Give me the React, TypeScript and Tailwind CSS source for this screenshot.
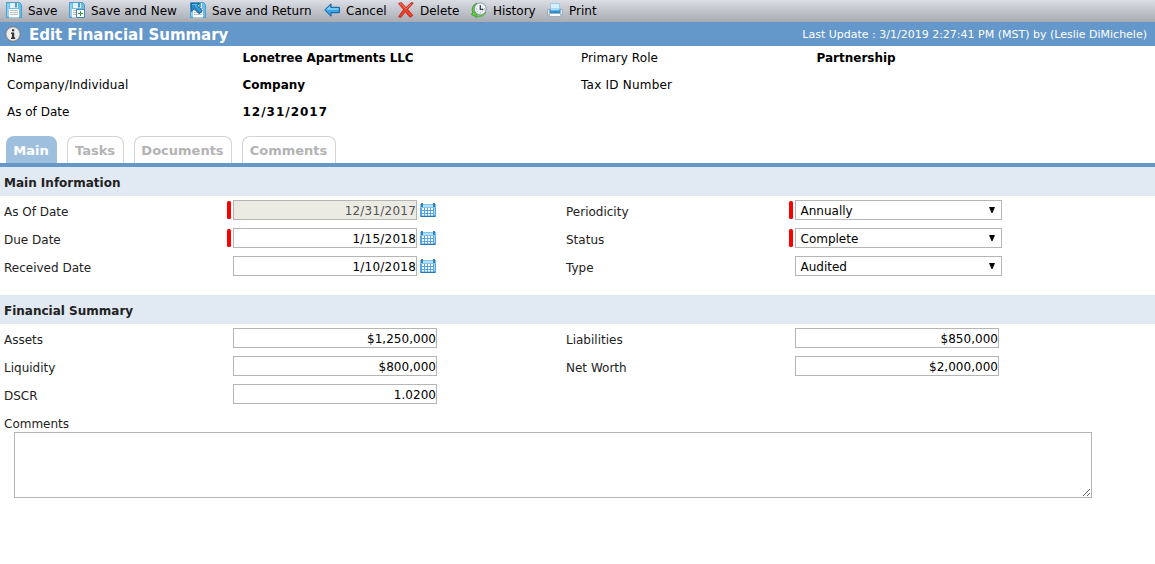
import type { ReactNode } from 'react';

function Floppy() {
  return (
    <>
      <path d="M.5.5h13l2 2v13H.5z" fill="#6cbce8" stroke="#4a9fd0" />
      <path d="M1.5 1.5h1v13h-1z" fill="#b4e3fa" />
      <path d="M4 1h8v5H4z" fill="#e4f1f9" />
      <path d="M9 1h2v4.5H9z" fill="#4b9fd2" />
      <path d="M3 7h10v8.500H3z" fill="#fff" />
      <path d="M4 8.500h8M4 10.500h8M4 12.500h8" stroke="#b9bfc4" />
    </>
  );
}

function Icon({ children }: { children: ReactNode }) {
  return (
    <svg className="block h-4 w-4 shrink-0" viewBox="0 0 16 16" fill="none">
      {children}
    </svg>
  );
}

const saveIcon = (
  <Icon>
    <Floppy />
  </Icon>
);

const saveNewIcon = (
  <Icon>
    <Floppy />
    <path d="M7.500 7.500h8v8h-8z" fill="#fff" stroke="#4484b8" />
    <path d="M11.500 9v5M9 11.500h5" stroke="#2d9c35" />
  </Icon>
);

const saveReturnIcon = (
  <Icon>
    <Floppy />
    <path d="M1 1.500h8.500L7.500 3.700l5 5-3.200 3.200-5-5L1.500 9.500z" fill="#2787c4" stroke="#0d538b" strokeWidth=".8" />
    <path d="M2 2.500h5L5.500 4l5 5" stroke="#6cc4f2" strokeWidth=".9" />
  </Icon>
);

const cancelIcon = (
  <Icon>
    <path d="M.7 8 7 1.800v3.500h8.400v5.400H7v3.500z" fill="#39a5e5" stroke="#0d5b9d" />
    <path d="M2.200 7.700 6 4v2.300h8.400v1.400z" fill="#86d3fa" />
  </Icon>
);

const deleteIcon = (
  <Icon>
    <path
      d="M.5 1.500 3.400.6 8 5.600 13.300.5l2 .5-5.600 6.300 5.200 6.300-3 1.700-4.600-5.500-4.500 5.700-2.300-.7 5-7.200z"
      fill="#ee3e27"
      stroke="#bd2418"
      strokeWidth=".8"
    />
    <path d="M2 2 3 1.600 8 7l4.900-5" stroke="#fb8a70" strokeWidth=".8" />
  </Icon>
);

const historyIcon = (
  <Icon>
    <path d="M6 1A7 7 0 0 0 1.700 10.500L.4 12.500 6 15.500l-.3-6L4 10.600V3z" fill="#62c83e" stroke="#2e8f2a" strokeWidth=".7" />
    <path d="M6 14A7 7 0 0 0 14.600 10" stroke="#5fbd43" strokeWidth="1.800" />
    <circle cx="9.300" cy="6.800" r="5.900" fill="#eef3f7" stroke="#8e9aa7" />
    <path d="M9.300 3.300v4h3" stroke="#2b3440" strokeWidth="1.200" />
    <path d="M5.300 7h.8M13 7h.8M9.300 10.500v.8M6.500 9.500l.6-.5M12 9.500l-.6-.5" stroke="#53606c" strokeWidth=".8" />
  </Icon>
);

const printIcon = (
  <Icon>
    <path d="M3.500 1.500h9v6h-9z" fill="#d9effc" stroke="#9dcdec" />
    <path d="M.5 8 2 7h12l1.500 1v5H.5z" fill="#dfe3e7" stroke="#a5acb3" />
    <path d="M2.500 7h11v4h-11z" fill="#2d8fcb" />
    <path d="M3.500 6h9v2.500h-9z" fill="#a9dbf7" />
    <path d="M2.500 11.500h11l.5 3H2z" fill="#f8fbfd" stroke="#9cb3c4" />
  </Icon>
);

const actions: { label: string; icon: ReactNode; width: string }[] = [
  { label: 'Save', icon: saveIcon, width: 'w-[63px]' },
  { label: 'Save and New', icon: saveNewIcon, width: 'w-[121px]' },
  { label: 'Save and Return', icon: saveReturnIcon, width: 'w-[134px]' },
  { label: 'Cancel', icon: cancelIcon, width: 'w-[74px]' },
  { label: 'Delete', icon: deleteIcon, width: 'w-[73px]' },
  { label: 'History', icon: historyIcon, width: 'w-[76px]' },
  { label: 'Print', icon: printIcon, width: 'w-[60px]' },
];

function Toolbar() {
  return (
    <div className="flex h-[22px] items-start bg-linear-to-b from-[#dcdee5] to-[#a9abb3] pl-[6px] pt-[2px]">
      {actions.map((a) => (
        <button key={a.label} className={`flex h-4 shrink-0 items-center gap-[6px] whitespace-nowrap ${a.width}`}>
          {a.icon}
          <span className="pt-[2px] leading-4">{a.label}</span>
        </button>
      ))}
    </div>
  );
}

function TitleBar() {
  return (
    <div className="flex h-6 items-center bg-[#6497ca] pl-[5px] pr-[8px] text-white">
      <svg className="mr-2 h-4 w-4" viewBox="0 0 16 16">
        <circle cx="8" cy="8" r="7.300" fill="#d9d9d9" stroke="#777" strokeWidth=".9" />
        <circle cx="8" cy="8" r="6" fill="#ececec" />
        <path d="M7 3.200h2.200v2H7zM6 6.500h3.200v5h1V13H6v-1.500h1V8H6z" fill="#333" />
      </svg>
      <h1 className="pt-[2px] text-[15px] font-bold tracking-[-0.030px]">Edit Financial Summary</h1>
      <span className="ml-auto pt-[2px] text-[11px]">Last Update : 3/1/2019 2:27:41 PM (MST) by (Leslie DiMichele)</span>
    </div>
  );
}

function Overview() {
  return (
    <div className="-mt-[2px] grid h-[92px] auto-rows-[27px] grid-cols-[235.500px_338.500px_235.500px_1fr] items-center pl-[7px] leading-[22px]">
      <span>Name</span>
      <b className="tracking-[-0.070px]">Lonetree Apartments LLC</b>
      <span className="tracking-[0.080px]">Primary Role</span>
      <b>Partnership</b>
      <span className="tracking-[0.100px]">Company/Individual</span>
      <b>Company</b>
      <span className="tracking-[0.220px]">Tax ID Number</span>
      <b />
      <span>As of Date</span>
      <b className="tracking-[1px]">12/31/2017</b>
    </div>
  );
}

const tabs = [
  { label: 'Main', width: 'w-[51px]' },
  { label: 'Tasks', width: 'w-[57px]' },
  { label: 'Documents', width: 'w-[98px]' },
  { label: 'Comments', width: 'w-[94px]' },
];

function Tabs() {
  return (
    <div className="flex h-[31px] gap-[10px] border-b-4 border-[#6497ca] pl-[6px] text-[13px] font-bold">
      {tabs.map((t, i) => (
        <button
          key={t.label}
          className={`flex items-center justify-center rounded-t-lg pr-px ${t.width} ${
            i === 0
              ? 'bg-[#9fbfdf] pt-[2px] text-white'
              : 'border border-b-0 border-[#d3d3d3] bg-white pt-px text-[#b3b3b3]'
          }`}
        >
          {t.label}
        </button>
      ))}
    </div>
  );
}

function SectionHeader({ children }: { children: ReactNode }) {
  return (
    <h2 className="flex h-[29px] items-center bg-[#e1e9f3] pl-1 pt-[3px] font-bold text-[#222]">{children}</h2>
  );
}

function CalendarIcon() {
  return (
    <svg className="ml-[3px] h-4 w-4 shrink-0" viewBox="0 0 16 16">
      <path d="M0 2h16v12l-1 1H1l-1-1z" fill="#55a5de" />
      <path d="M0 2h16v4H0z" fill="#7fc3ef" />
      <path d="M3 3h10v2H3z" fill="#b5dff8" />
      <path d="M1 1h2v4H1zM13 1h2v4h-2z" fill="#3480bd" />
      <path
        d="M2 6h2v2H2zM5 6h2v2H5zM8 6h2v2H8zM11 6h2v2h-2zM2 9h2v2H2zM5 9h2v2H5zM8 9h2v2H8zM11 9h2v2h-2zM2 12h2v1.500H2zM5 12h2v1.500H5zM8 12h2v1.500H8zM11 12h2v1.500h-2z"
        fill="#fff"
      />
      <path d="M14 6h1v7h-1z" fill="#a8d6f3" />
      <path d="M0 14h16l-1 1H1z" fill="#2c78b7" />
    </svg>
  );
}

function Marker({ on }: { on?: boolean }) {
  return <i className={`mr-[2px] h-[18px] w-1 shrink-0 rounded-[1.500px] ${on ? 'bg-[#fa0000]' : ''}`} />;
}

type FieldProps = { label: string; value: string; kind: 'date' | 'select' | 'money'; required?: boolean; disabled?: boolean };

function Field({ label, value, kind, required, disabled }: FieldProps) {
  return (
    <div className="flex h-7 items-center">
      <label className="w-[223px] shrink-0 pt-[3px] text-[#222]">{label}</label>
      <Marker on={required} />
      {kind === 'select' ? (
        <div className="flex h-5 w-[207px] items-center justify-between border border-[#b5b5b5] bg-white pl-[4.500px] pr-[6px]">
          <span className="pt-px">{value}</span>
          <svg className="-mt-px h-[6px] w-[6px]" viewBox="0 0 6 6">
            <path d="M0 0h6L3.500 6h-1z" />
          </svg>
        </div>
      ) : (
        <input
          defaultValue={value}
          disabled={disabled}
          className={`h-5 border border-[#b5b5b5] p-0 pt-px text-right ${
            kind === 'date' ? 'w-[184px] tracking-[0.220px]' : 'w-[204px] tracking-[0.030px]'
          } ${disabled ? 'bg-[#ebebe4] text-[#545454]' : 'bg-white text-black'}`}
        />
      )}
      {kind === 'date' && <CalendarIcon />}
    </div>
  );
}

export default function App() {
  return (
    <div className="h-[564px] w-[1155px] overflow-hidden bg-white font-['DejaVu_Sans',Verdana,sans-serif] text-[12px] text-black">
      <Toolbar />
      <TitleBar />
      <Overview />
      <Tabs />
      <SectionHeader>Main Information</SectionHeader>
      <div className="grid h-[99px] grid-cols-[562px_1fr] content-start pl-1">
        <Field label="As Of Date" value="12/31/2017" kind="date" required disabled />
        <Field label="Periodicity" value="Annually" kind="select" required />
        <Field label="Due Date" value="1/15/2018" kind="date" required />
        <Field label="Status" value="Complete" kind="select" required />
        <Field label="Received Date" value="1/10/2018" kind="date" />
        <Field label="Type" value="Audited" kind="select" />
      </div>
      <SectionHeader>Financial Summary</SectionHeader>
      <div className="grid grid-cols-[562px_1fr] content-start pl-1">
        <Field label="Assets" value="$1,250,000" kind="money" />
        <Field label="Liabilities" value="$850,000" kind="money" />
        <Field label="Liquidity" value="$800,000" kind="money" />
        <Field label="Net Worth" value="$2,000,000" kind="money" />
        <Field label="DSCR" value="1.0200" kind="money" />
      </div>
      <div className="flex flex-col pt-[8px]">
        <label className="h-4 pl-1 leading-4 text-[#222]">Comments</label>
        <textarea className="ml-[14px] block h-[66px] w-[1078px] resize border border-[#b5b5b5] bg-white" />
      </div>
    </div>
  );
}
